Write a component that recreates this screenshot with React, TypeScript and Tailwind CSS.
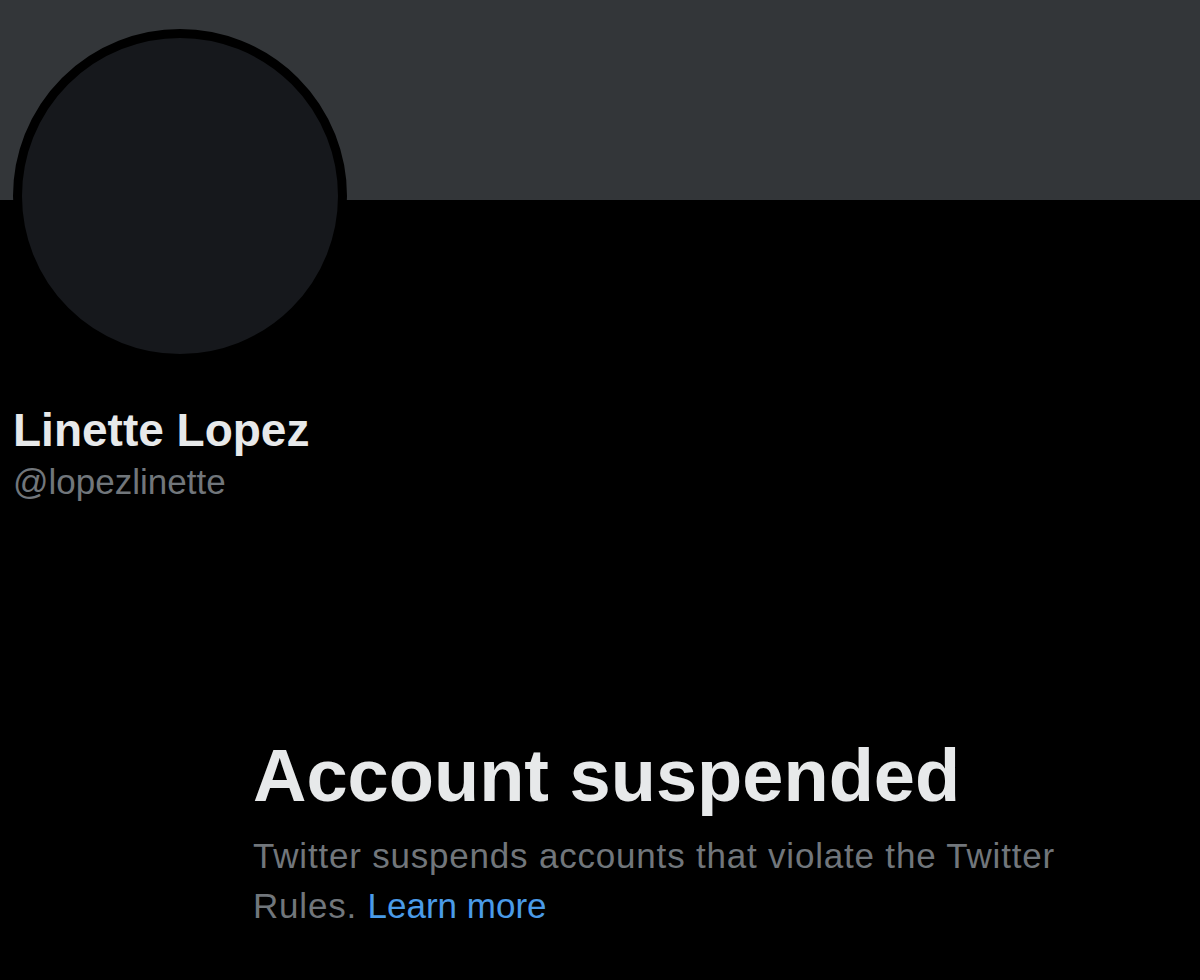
export default function App() {
  return (
    <div className="min-h-[980px] w-full bg-black font-['Liberation_Sans',Arial,sans-serif] overflow-hidden">
      {/* Banner */}
      <div className="h-[200px] w-full bg-[#333639]" />

      {/* Profile */}
      <div className="px-[13px]">
        <div className="-mt-[171px] h-[334px] w-[334px] rounded-full border-[9px] border-black bg-[#16181c]" />
        <div className="mt-[40px]">
          <div className="text-[46px] leading-[55px] font-bold text-[#e7e9ea]">Linette Lopez</div>
          <div className="text-[35px] leading-[47px] text-[#71767b]">@lopezlinette</div>
        </div>
      </div>

      {/* Suspended notice */}
      <div className="mt-[231px] pl-[253px]">
        <h1 className="text-[74px] leading-[80px] font-bold text-[#e7e9ea]">Account suspended</h1>
        <p className="mt-[15px] max-w-[840px] text-[35px] leading-[50px] tracking-[0.8px] text-[#71767b]">
          Twitter suspends accounts that violate the Twitter Rules.{" "}
          <a href="#" className="tracking-normal text-[#4a9be8]">Learn more</a>
        </p>
      </div>
    </div>
  );
}
